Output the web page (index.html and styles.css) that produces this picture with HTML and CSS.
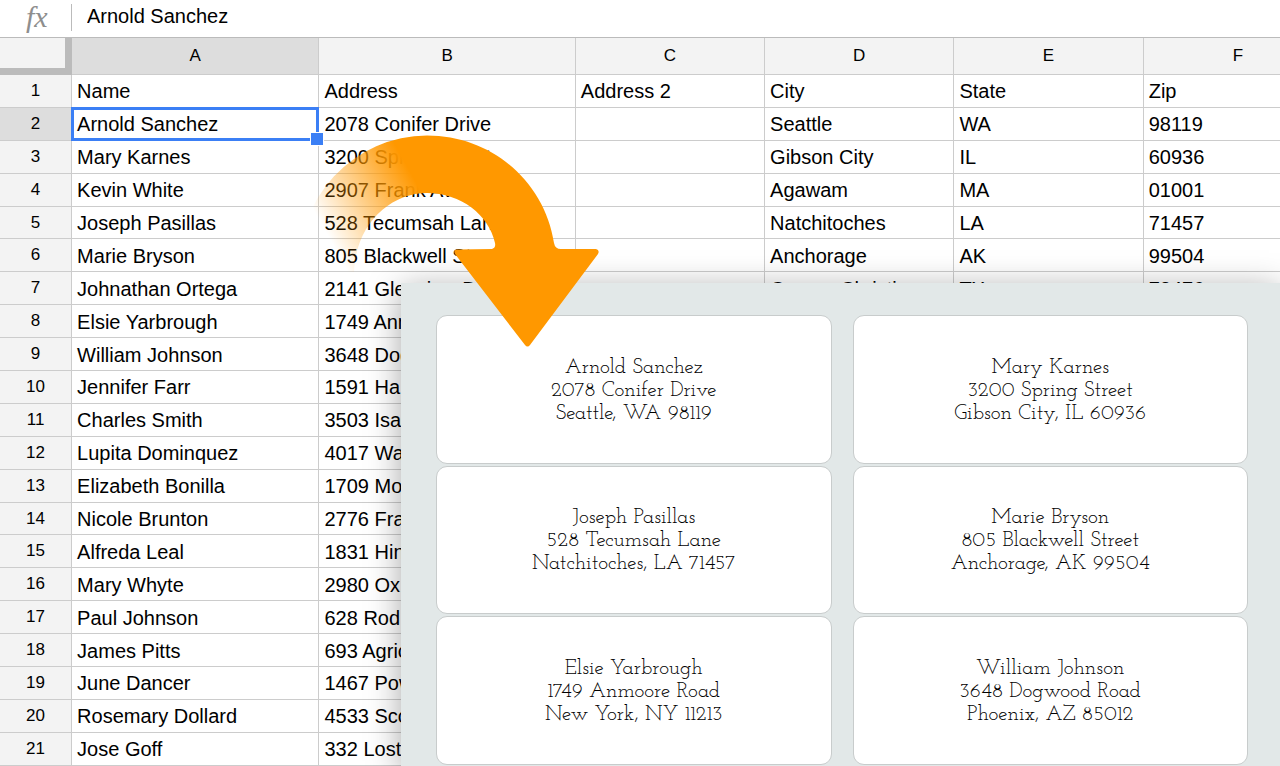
FILE: index.html
```html
<!DOCTYPE html>
<html lang="en">
  <head>
    <meta charset="utf-8" />
    <meta name="viewport" content="width=device-width, initial-scale=1.0" />
    <title>Address labels</title>
    <link rel="stylesheet" href="styles.css">
  </head>

  <body>
    <div class="page">
      <!-- formula bar -->
      <div class="formula-bar">
        <label class="fx" for="formula">fx</label>
        <input class="formula" id="formula" type="text" value="Arnold Sanchez" />
      </div>

      <!-- spreadsheet -->
      <table class="sheet">
        <colgroup>
          <col class="col-num" />
          <col class="col-name" />
          <col class="col-address" />
          <col class="col-other" />
          <col class="col-other" />
          <col class="col-other" />
          <col class="col-other" />
        </colgroup>
        <thead>
          <tr>
            <td class="corner"></td>
            <th class="active">A</th>
            <th>B</th>
            <th>C</th>
            <th>D</th>
            <th>E</th>
            <th>F</th>
          </tr>
        </thead>
        <tbody>
          <tr><th>1</th><td>Name</td><td>Address</td><td>Address 2</td><td>City</td><td>State</td><td>Zip</td></tr>
          <tr><th class="active">2</th><td class="selected">Arnold Sanchez</td><td>2078 Conifer Drive</td><td></td><td>Seattle</td><td>WA</td><td>98119</td></tr>
          <tr><th>3</th><td>Mary Karnes</td><td>3200 Spring Street</td><td></td><td>Gibson City</td><td>IL</td><td>60936</td></tr>
          <tr><th>4</th><td>Kevin White</td><td>2907 Frank Ave</td><td></td><td>Agawam</td><td>MA</td><td>01001</td></tr>
          <tr><th>5</th><td>Joseph Pasillas</td><td>528 Tecumsah Lane</td><td></td><td>Natchitoches</td><td>LA</td><td>71457</td></tr>
          <tr><th>6</th><td>Marie Bryson</td><td>805 Blackwell Street</td><td></td><td>Anchorage</td><td>AK</td><td>99504</td></tr>
          <tr><th>7</th><td>Johnathan Ortega</td><td>2141 Glenview Drive</td><td></td><td>Corpus Christi</td><td>TX</td><td>78476</td></tr>
          <tr><th>8</th><td>Elsie Yarbrough</td><td>1749 Anmoore Road</td><td></td><td></td><td></td><td></td></tr>
          <tr><th>9</th><td>William Johnson</td><td>3648 Dogwood Road</td><td></td><td></td><td></td><td></td></tr>
          <tr><th>10</th><td>Jennifer Farr</td><td>1591 Ha</td><td></td><td></td><td></td><td></td></tr>
          <tr><th>11</th><td>Charles Smith</td><td>3503 Isa</td><td></td><td></td><td></td><td></td></tr>
          <tr><th>12</th><td>Lupita Dominquez</td><td>4017 Wa</td><td></td><td></td><td></td><td></td></tr>
          <tr><th>13</th><td>Elizabeth Bonilla</td><td>1709 Mo</td><td></td><td></td><td></td><td></td></tr>
          <tr><th>14</th><td>Nicole Brunton</td><td>2776 Fra</td><td></td><td></td><td></td><td></td></tr>
          <tr><th>15</th><td>Alfreda Leal</td><td>1831 Hin</td><td></td><td></td><td></td><td></td></tr>
          <tr><th>16</th><td>Mary Whyte</td><td>2980 Ox</td><td></td><td></td><td></td><td></td></tr>
          <tr><th>17</th><td>Paul Johnson</td><td>628 Rod</td><td></td><td></td><td></td><td></td></tr>
          <tr><th>18</th><td>James Pitts</td><td>693 Agric</td><td></td><td></td><td></td><td></td></tr>
          <tr><th>19</th><td>June Dancer</td><td>1467 Pow</td><td></td><td></td><td></td><td></td></tr>
          <tr><th>20</th><td>Rosemary Dollard</td><td>4533 Sco</td><td></td><td></td><td></td><td></td></tr>
          <tr><th>21</th><td>Jose Goff</td><td>332 Lost</td><td></td><td></td><td></td><td></td></tr>
        </tbody>
      </table>

      <!-- label sheet on top of the table -->
      <div class="labels">
        <div class="label">Arnold Sanchez<br />2078 Conifer Drive<br />Seattle, WA 98119</div>
        <div class="label">Mary Karnes<br />3200 Spring Street<br />Gibson City, IL 60936</div>
        <div class="label">Joseph Pasillas<br />528 Tecumsah Lane<br />Natchitoches, LA 71457</div>
        <div class="label">Marie Bryson<br />805 Blackwell Street<br />Anchorage, AK 99504</div>
        <div class="label">Elsie Yarbrough<br />1749 Anmoore Road<br />New York, NY 11213</div>
        <div class="label">William Johnson<br />3648 Dogwood Road<br />Phoenix, AZ 85012</div>
      </div>

      <svg class="arrow" viewBox="300 130 304 224" aria-hidden="true">
        <defs>
          <linearGradient id="fade" gradientUnits="userSpaceOnUse" x1="322" y1="225" x2="412" y2="175">
            <stop offset="0" stop-color="#ff9800" stop-opacity="0" />
            <stop offset="1" stop-color="#ff9800" />
          </linearGradient>
        </defs>
        <path
          fill="url(#fade)"
          d="M300 272 A128 128 0 0 1 427 135.500 C493 135.500 545 183 554 243 Q555 249 561 249 L596 249 Q600 250 598 254 L530 345 Q527.500 348 525 345 L455 254 Q453 250 457 249.500 L492 249 Q496 248 495 243 C489 215 461 193 427 193 C391 193 356 223 354 272 Z"
        />
      </svg>
    </div>
  </body>
</html>
```
FILE: styles.css
```css
* {
  box-sizing: border-box;
}

body {
  margin: 0;
  background: #fff;
  color: #000;
  font-family: Arial, "Liberation Sans", sans-serif;
  font-size: 20px;
}

.page {
  position: relative;
  display: flex;
  flex-direction: column;
  height: 100vh;
  overflow: hidden;
}

/* formula bar */
.formula-bar {
  display: flex;
  flex: none;
  align-items: flex-start;
  height: 37px;
}

.fx {
  width: 71px;
  padding-left: 26px;
  color: #8e8e8e;
  font: italic 30px/34px "Liberation Serif", serif;
}

.formula {
  flex: 1;
  height: 27px;
  margin-top: 4px;
  padding: 0 15px 2px;
  border: 0;
  border-left: 1px solid #bbb;
  outline: 0;
  background: none;
  color: inherit;
  font: inherit;
}

/* spreadsheet */
.sheet {
  flex: 1;
  width: 1333px;
  table-layout: fixed;
  border-collapse: separate;
  border-spacing: 0;
  border-top: 1px solid #bbb;
}

.col-num {
  width: 72px;
}

.col-name {
  width: 247px;
}

.col-address {
  width: 256px;
}

.col-other {
  width: 189px;
}

.sheet th,
.sheet td {
  height: 32px;
  padding: 1px 5px 0;
  border-right: 1px solid #ccc;
  border-bottom: 1px solid #ccc;
  line-height: 24px;
  text-align: left;
  white-space: nowrap;
}

.sheet th {
  padding: 0;
  background: #f3f3f3;
  font-size: 17px;
  font-weight: normal;
  text-align: center;
}

.sheet thead th,
.sheet .corner {
  height: 37px;
}

.sheet .corner {
  background: #f3f3f3;
  border-right: 7px solid #bbb;
  border-bottom: 7px solid #bbb;
}

.sheet th.active {
  background: #ddd;
}

.sheet .selected {
  position: relative;
}

.selected::before {
  content: "";
  position: absolute;
  inset: -1px;
  border: 3px solid #3b7ff5;
}

.selected::after {
  content: "";
  position: absolute;
  right: -6px;
  bottom: -6px;
  width: 12px;
  height: 12px;
  border: 1px solid #fff;
  background: #3b7ff5;
}

/* labels */
.labels {
  position: absolute;
  top: 283px;
  right: 0;
  bottom: 0;
  left: 401px;
  display: grid;
  grid-template-columns: 1fr 1fr;
  grid-auto-rows: 1fr;
  gap: 2px 21px;
  padding: 32px 32px 1px 35px;
  background: #e2e8e8;
  box-shadow: 0 6px 32px rgba(0, 0, 0, 0.35);
}

.label {
  display: flex;
  align-items: center;
  justify-content: center;
  padding-top: 2px;
  border: 1px solid #c8cccc;
  border-radius: 11px;
  background: #fff;
  color: #000;
  font: 21px/23px "Josefin Slab", "Liberation Serif", serif;
  text-align: center;
}

.arrow {
  position: absolute;
  top: 130px;
  left: 300px;
  width: 304px;
  height: 224px;
}
```
